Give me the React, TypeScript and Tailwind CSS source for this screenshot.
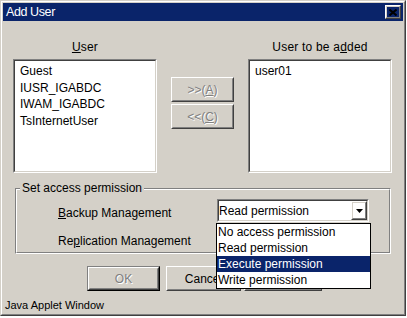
import React from 'react'

const font = "font-['Liberation_Sans',Arial,sans-serif]"
const etched = 'text-[#808080] [text-shadow:1px_1px_0_#fff]'

const Raised = ({ className = '', children }: { className?: string; children?: React.ReactNode }) => (
    <div className={`border border-t-white border-l-white border-r-[#404040] border-b-[#404040] ${className}`}>
        <div className='h-full w-full border border-t-[#d4d0c8] border-l-[#d4d0c8] border-r-[#808080] border-b-[#808080] flex items-center justify-center'>
            {children}
        </div>
    </div>
)

const Sunken = ({ className = '', children }: { className?: string; children?: React.ReactNode }) => (
    <div className={`border border-t-[#808080] border-l-[#808080] border-r-white border-b-white ${className}`}>
        <div className='h-full w-full border border-t-[#404040] border-l-[#404040] border-r-[#d4d0c8] border-b-[#d4d0c8] bg-white'>
            {children}
        </div>
    </div>
)

const ListBox = ({ items }: { items: string[] }) => (
    <Sunken className='w-[144px] h-[114px]'>
        <div className='pt-[2px] pl-[5px] flex flex-col'>
            {items.map((item) => (
                <div key={item} className='leading-[16.7px] h-[16.7px] whitespace-nowrap'>{item}</div>
            ))}
        </div>
    </Sunken>
)

const Combo = ({ value, children }: { value: string; children?: React.ReactNode }) => (
    <div className='relative'>
        <Sunken className='w-[152px] h-[23px]'>
            <div className='h-full flex items-center justify-between'>
                <span className='pt-[1px] leading-[16px]'>{value}</span>
                <Raised className='w-[16px] h-full'>
                    <svg width='7' height='4' viewBox='0 0 7 4'>
                        <polygon points='0,0 7,0 3.5,4' fill='#000' />
                    </svg>
                </Raised>
            </div>
        </Sunken>
        {children}
    </div>
)

const options = ['No access permission', 'Read permission', 'Execute permission', 'Write permission']

const App = () => {
    return (
        <div className={`w-[407px] h-[318px] bg-white text-[12px] text-black ${font}`}>
            <div className='w-[406px] h-[316px] border border-t-[#d4d0c8] border-l-[#d4d0c8] border-r-[#404040] border-b-[#404040]'>
                <div className='h-full border border-t-white border-l-white border-r-[#808080] border-b-[#808080] bg-[#d4d0c8] p-[1px] flex flex-col'>
                    {/* title bar */}
                    <div className='h-[18px] shrink-0 bg-[#0a246a] flex items-center justify-between pl-[3px] pr-[2px]'>
                        <span className='text-white text-[12.5px] leading-none tracking-[-0.4px]'>Add User</span>
                        <Raised className='w-[16px] h-[14px]'>
                            <svg width='8' height='7' viewBox='0 0 8 7' className='block'>
                                <path d='M0.5 0.5 L7.5 6.5 M7.5 0.5 L0.5 6.5' stroke='#000' strokeWidth='2' />
                            </svg>
                        </Raised>
                    </div>

                    {/* user lists */}
                    <div className='pt-[18px] pl-[10px] flex items-start'>
                        <div className='flex flex-col items-center'>
                            <div className='h-[16px] leading-[16px] mb-[4px] tracking-[0.2px]'><u>U</u>ser</div>
                            <ListBox items={['Guest', 'IUSR_IGABDC', 'IWAM_IGABDC', 'TsInternetUser']} />
                        </div>
                        <div className='ml-[14px] mt-[38px] flex flex-col gap-[2px]'>
                            <Raised className='w-[63px] h-[25px]'>
                                <span className={etched}>&gt;&gt;(<u>A</u>)</span>
                            </Raised>
                            <Raised className='w-[63px] h-[25px]'>
                                <span className={etched}>&lt;&lt;(<u>C</u>)</span>
                            </Raised>
                        </div>
                        <div className='ml-[14px] flex flex-col items-center'>
                            <div className='h-[16px] leading-[16px] mb-[4px] tracking-[0.2px]'>User to be a<u>d</u>ded</div>
                            <ListBox items={['user01']} />
                        </div>
                    </div>

                    {/* access permission group */}
                    <div className='relative mt-[15px] ml-[12px] w-[376px] h-[68px] border border-t-[#808080] border-l-[#808080] border-r-white border-b-white'>
                        <div className='h-full border border-t-white border-l-white border-r-[#808080] border-b-[#808080] pt-[9px] pl-[41px] flex flex-col gap-[5px]'>
                            <div className='h-[23px] flex items-center'>
                                <div className='w-[159px] pt-[5px]'><u>B</u>ackup Management</div>
                                <Combo value='Read permission'>
                                    <div className='absolute z-10 left-[-1px] top-[24px] w-[155px] border border-black bg-white flex flex-col'>
                                        {options.map((opt, i) => (
                                            <div
                                                key={opt}
                                                className={`h-[16px] leading-[16px] pl-[1px] whitespace-nowrap ${i === 2 ? 'bg-[#0a246a] text-white' : ''}`}
                                            >
                                                {opt}
                                            </div>
                                        ))}
                                    </div>
                                </Combo>
                            </div>
                            <div className='h-[23px] flex items-center'>
                                <div className='w-[159px] pt-[5px]'>Re<u>p</u>lication Management</div>
                                <Combo value='' />
                            </div>
                        </div>
                        <div className='absolute left-[4px] top-[-9px] px-[2px] bg-[#d4d0c8] leading-[16px]'>Set access permission</div>
                    </div>

                    {/* buttons */}
                    <div className='mt-[12px] pl-[84px] flex'>
                        <div className='w-[73px] h-[25px] border border-t-[#808080] border-l-[#808080] border-r-black border-b-black'>
                            <Raised className='w-full h-full'>
                                <span className={etched}>OK</span>
                            </Raised>
                        </div>
                        <Raised className='ml-[6px] w-[75px] h-[25px]'>
                            <span>Cancel</span>
                        </Raised>
                        <Raised className='ml-[3px] w-[78px] h-[25px]' />
                    </div>

                    {/* status */}
                    <div className='mt-[6px] pl-[2px] text-[11px] leading-[16px]'>Java Applet Window</div>
                </div>
            </div>
        </div>
    )
}

export default App
